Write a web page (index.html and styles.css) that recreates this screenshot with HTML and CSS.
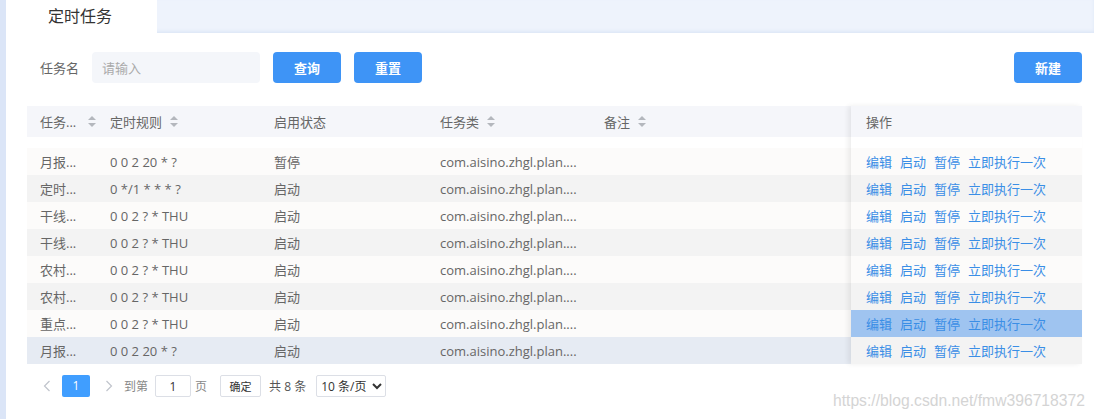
FILE: index.html
```html
<!DOCTYPE html>
<html lang="zh-CN">
  <head>
    <meta charset="UTF-8" />
    <title>定时任务</title>
    <link rel="stylesheet" href="styles.css">
  </head>
  <body>
    <div class="app">
      <div class="tabs">
        <div class="tab active">定时任务</div>
      </div>

      <div class="content">
        <!-- 查询条件 -->
        <div class="search-bar">
          <label class="search-label">任务名</label>
          <input class="search-input" type="text" placeholder="请输入" />
          <button class="btn">查询</button>
          <button class="btn">重置</button>
          <button class="btn btn-right">新建</button>
        </div>

        <!-- 表格 -->
        <div class="table">
          <div class="table-main">
            <div class="row head">
              <div class="cell">任务... <span class="sort first"><svg width="8" height="11" viewBox="0 0 8 11"><path d="M4 0 L8 4 L0 4 Z" fill="#b4b7bd"/><path d="M0 7 L8 7 L4 11 Z" fill="#b4b7bd"/></svg></span></div>
              <div class="cell">定时规则 <span class="sort"><svg width="8" height="11" viewBox="0 0 8 11"><path d="M4 0 L8 4 L0 4 Z" fill="#b4b7bd"/><path d="M0 7 L8 7 L4 11 Z" fill="#b4b7bd"/></svg></span></div>
              <div class="cell">启用状态</div>
              <div class="cell">任务类 <span class="sort"><svg width="8" height="11" viewBox="0 0 8 11"><path d="M4 0 L8 4 L0 4 Z" fill="#b4b7bd"/><path d="M0 7 L8 7 L4 11 Z" fill="#b4b7bd"/></svg></span></div>
              <div class="cell">备注 <span class="sort"><svg width="8" height="11" viewBox="0 0 8 11"><path d="M4 0 L8 4 L0 4 Z" fill="#b4b7bd"/><path d="M0 7 L8 7 L4 11 Z" fill="#b4b7bd"/></svg></span></div>
            </div>
            <div class="body">
              <div class="row"><div class="cell">月报...</div><div class="cell">0 0 2 20 * ?</div><div class="cell">暂停</div><div class="cell">com.aisino.zhgl.plan....</div><div class="cell"></div></div>
              <div class="row"><div class="cell">定时...</div><div class="cell">0 */1 * * * ?</div><div class="cell">启动</div><div class="cell">com.aisino.zhgl.plan....</div><div class="cell"></div></div>
              <div class="row"><div class="cell">干线...</div><div class="cell">0 0 2 ? * THU</div><div class="cell">启动</div><div class="cell">com.aisino.zhgl.plan....</div><div class="cell"></div></div>
              <div class="row"><div class="cell">干线...</div><div class="cell">0 0 2 ? * THU</div><div class="cell">启动</div><div class="cell">com.aisino.zhgl.plan....</div><div class="cell"></div></div>
              <div class="row"><div class="cell">农村...</div><div class="cell">0 0 2 ? * THU</div><div class="cell">启动</div><div class="cell">com.aisino.zhgl.plan....</div><div class="cell"></div></div>
              <div class="row"><div class="cell">农村...</div><div class="cell">0 0 2 ? * THU</div><div class="cell">启动</div><div class="cell">com.aisino.zhgl.plan....</div><div class="cell"></div></div>
              <div class="row"><div class="cell">重点...</div><div class="cell">0 0 2 ? * THU</div><div class="cell">启动</div><div class="cell">com.aisino.zhgl.plan....</div><div class="cell"></div></div>
              <div class="row hover"><div class="cell">月报...</div><div class="cell">0 0 2 20 * ?</div><div class="cell">启动</div><div class="cell">com.aisino.zhgl.plan....</div><div class="cell"></div></div>
            </div>
          </div>

          <!-- 固定列 -->
          <div class="table-fixed">
            <div class="row head"><div class="cell">操作</div></div>
            <div class="body">
              <div class="row"><div class="cell ops"><a>编辑</a><a>启动</a><a>暂停</a><a>立即执行一次</a></div></div>
              <div class="row"><div class="cell ops"><a>编辑</a><a>启动</a><a>暂停</a><a>立即执行一次</a></div></div>
              <div class="row"><div class="cell ops"><a>编辑</a><a>启动</a><a>暂停</a><a>立即执行一次</a></div></div>
              <div class="row"><div class="cell ops"><a>编辑</a><a>启动</a><a>暂停</a><a>立即执行一次</a></div></div>
              <div class="row"><div class="cell ops"><a>编辑</a><a>启动</a><a>暂停</a><a>立即执行一次</a></div></div>
              <div class="row"><div class="cell ops"><a>编辑</a><a>启动</a><a>暂停</a><a>立即执行一次</a></div></div>
              <div class="row selected"><div class="cell ops"><a>编辑</a><a>启动</a><a>暂停</a><a>立即执行一次</a></div></div>
              <div class="row"><div class="cell ops"><a>编辑</a><a>启动</a><a>暂停</a><a>立即执行一次</a></div></div>
            </div>
          </div>
        </div>

        <!-- 分页 -->
        <div class="pager">
          <span class="pager-arrow">
            <svg width="8" height="12" viewBox="0 0 8 12"><path d="M6.5 1 L1.5 6 L6.5 11" fill="none" stroke="#c0c4cc" stroke-width="1.2"/></svg>
          </span>
          <span class="pager-num">1</span>
          <span class="pager-arrow">
            <svg width="8" height="12" viewBox="0 0 8 12"><path d="M1.5 1 L6.5 6 L1.5 11" fill="none" stroke="#c0c4cc" stroke-width="1.2"/></svg>
          </span>
          <span class="pager-text">到第</span>
          <input class="pager-input" type="text" value="1" />
          <span class="pager-text">页</span>
          <button class="pager-btn">确定</button>
          <span class="pager-total">共 8 条</span>
          <select class="pager-select">
            <option>10 条/页</option>
            <option>20 条/页</option>
          </select>
        </div>
      </div>

      <div class="watermark">https://blog.csdn.net/fmw396718372</div>
    </div>
  </body>
</html>
```

FILE: styles.css
```css
* {
  box-sizing: border-box;
}

body {
  margin: 0;
  font-family: "Open Sans", "Noto Sans CJK SC", sans-serif;
  font-size: 13px;
  color: #666;
  background: #fff;
}

.app {
  position: relative;
  height: 419px;
  border-left: 6px solid #dbe5f7;
  overflow: hidden;
}

/* 标签栏 */
.tabs {
  display: flex;
  height: 33px;
  background: #eef3fc;
  box-shadow: inset 0 -2px 3px rgba(180, 200, 235, 0.25);
}

.tab {
  width: 151px;
  padding-left: 42px;
  line-height: 33px;
  font-size: 16px;
  color: #333;
}

.tab.active {
  background: #fff;
}

.content {
  padding: 19px 12px 0 21px;
}

/* 查询 */
.search-bar {
  display: flex;
  align-items: center;
  height: 31px;
}

.search-label {
  margin-left: 13px;
  width: 52px;
  color: #666;
}

.search-input {
  width: 168px;
  height: 31px;
  border: none;
  border-radius: 4px;
  background: #f4f6fa;
  padding: 0 10px;
  font-family: inherit;
  font-size: 13px;
  margin-right: 13px;
  outline: none;
}

.search-input::placeholder {
  color: #aaa;
}

.btn {
  width: 68px;
  height: 31px;
  border: none;
  border-radius: 4px;
  background: #3e94f6;
  color: #fff;
  font-family: inherit;
  font-size: 13px;
  font-weight: bold;
  margin-right: 13px;
  cursor: pointer;
}

.btn-right {
  margin-left: auto;
  margin-right: 0;
}

/* 表格 */
.table {
  display: flex;
  margin-top: 23px;
}

.table-main {
  flex: 1;
}

.table-fixed {
  width: 231px;
  box-shadow: -3px 0 5px rgba(0, 0, 0, 0.07);
  position: relative;
}

.row {
  display: flex;
  height: 27px;
  align-items: center;
}

.row.head {
  height: 31px;
  background: #f5f6fa;
}

.body {
  margin-top: 11px;
}

.body .row:nth-child(odd) {
  background: #fcfbfa;
}

.body .row:nth-child(even) {
  background: #f3f3f3;
}

.body .row.hover {
  background: #e6ebf3;
}

.body .row.selected {
  background: #9fc4f0;
}

.cell {
  padding-left: 13px;
  white-space: nowrap;
  display: flex;
  align-items: center;
}

.table-main .cell:nth-child(1) { width: 70px; }
.table-main .cell:nth-child(2) { width: 164px; }
.table-main .cell:nth-child(3) { width: 166px; }
.table-main .cell:nth-child(4) { width: 164px; }
.table-main .cell:nth-child(5) { flex: 1; }

.table-fixed .cell {
  padding-left: 15px;
}

.sort {
  display: inline-flex;
  margin-left: 8px;
}

.sort.first {
  margin-left: 12px;
}

.ops a {
  color: #3a8ee6;
  margin-right: 8px;
  cursor: pointer;
}

/* 分页 */
.pager {
  display: flex;
  align-items: center;
  margin-top: 11px;
  padding-left: 9px;
  height: 22px;
  font-size: 12px;
}

.pager-arrow {
  display: inline-flex;
  width: 22px;
  justify-content: center;
}

.pager-num {
  width: 28px;
  height: 22px;
  line-height: 22px;
  text-align: center;
  background: #409eff;
  color: #fff;
  border-radius: 2px;
  margin: 0 8px 0 4px;
}

.pager-text {
  margin: 0 7px 0 4px;
  color: #888;
}

.pager-input {
  width: 36px;
  height: 22px;
  border: 1px solid #dcdfe6;
  border-radius: 2px;
  text-align: center;
  font-family: inherit;
  font-size: 12px;
  color: #333;
}

.pager-btn {
  width: 41px;
  height: 22px;
  border: 1px solid #dcdfe6;
  border-radius: 2px;
  background: #fff;
  font-family: inherit;
  font-size: 11px;
  color: #333;
  padding: 0;
  margin-left: 6px;
}

.pager-total {
  margin: 0 10px 0 8px;
  color: #555;
}

.pager-select {
  width: 70px;
  height: 22px;
  border: 1px solid #dcdfe6;
  border-radius: 2px;
  font-family: inherit;
  font-size: 12px;
  color: #333;
  background: #fff;
}

.watermark {
  position: absolute;
  right: 9px;
  bottom: 9px;
  font-family: "Liberation Sans", sans-serif;
  font-size: 15.7px;
  color: #d4d4d4;
  text-shadow: 0 0 1px #fff;
}
```
